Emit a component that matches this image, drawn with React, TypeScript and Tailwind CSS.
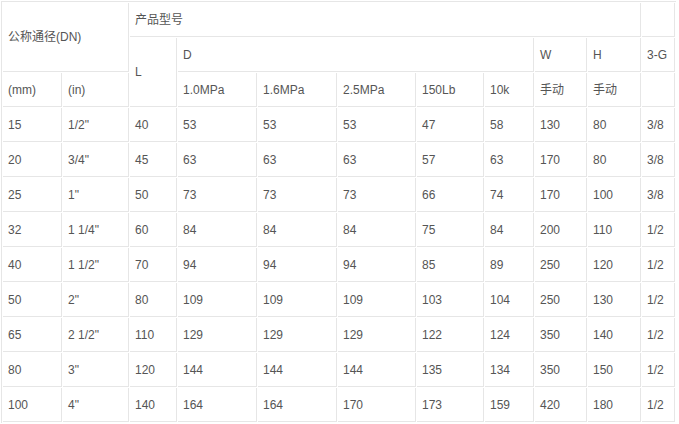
import React from 'react';

const rows: string[][] = [
  ['15', '1/2"', '40', '53', '53', '53', '47', '58', '130', '80', '3/8'],
  ['20', '3/4"', '45', '63', '63', '63', '57', '63', '170', '80', '3/8'],
  ['25', '1"', '50', '73', '73', '73', '66', '74', '170', '100', '3/8'],
  ['32', '1 1/4"', '60', '84', '84', '84', '75', '84', '200', '110', '1/2'],
  ['40', '1 1/2"', '70', '94', '94', '94', '85', '89', '250', '120', '1/2'],
  ['50', '2"', '80', '109', '109', '109', '103', '104', '250', '130', '1/2'],
  ['65', '2 1/2"', '110', '129', '129', '129', '122', '124', '350', '140', '1/2'],
  ['80', '3"', '120', '144', '144', '144', '135', '134', '350', '150', '1/2'],
  ['100', '4"', '140', '164', '164', '170', '173', '159', '420', '180', '1/2'],
];

// largeurs des colonnes (sans l'espacement de 1px)
const widths = [59, 66, 47, 79, 79, 78, 67, 49, 52, 53, 33];

// cellule : bordure droite + bas seulement, le trou aux croisements vient du border-spacing
const cell = 'h-[34px] border-r border-b border-[#e6e6e6] pl-[5px] pr-0 py-0 text-left align-middle font-normal whitespace-nowrap';

export default function App() {
  return (
    <div className="bg-white p-px" style={{ fontFamily: '"Liberation Sans", "Noto Sans CJK SC", Arial, sans-serif' }}>
      <table className="table-fixed border-separate border-spacing-[1px] border-t border-l border-[#e6e6e6] text-[12px] leading-[14px] text-[#555]">
        <colgroup>
          {widths.map((w, i) => (
            <col key={i} style={{ width: w }} />
          ))}
        </colgroup>
        <thead>
          <tr>
            <th colSpan={2} rowSpan={2} className={cell}>公称通径(DN)</th>
            <th colSpan={8} className={cell}>产品型号</th>
            <th className={cell}></th>
          </tr>
          <tr>
            <th rowSpan={2} className={cell}>L</th>
            <th colSpan={5} className={cell}>D</th>
            <th className={cell}>W</th>
            <th className={cell}>H</th>
            <th className={cell}>3-G</th>
          </tr>
          <tr>
            <th className={cell}>(mm)</th>
            <th className={cell}>(in)</th>
            <th className={cell}>1.0MPa</th>
            <th className={cell}>1.6MPa</th>
            <th className={cell}>2.5MPa</th>
            <th className={cell}>150Lb</th>
            <th className={cell}>10k</th>
            <th className={cell}>手动</th>
            <th className={cell}>手动</th>
            <th className={cell}></th>
          </tr>
        </thead>
        <tbody>
          {rows.map((r, i) => (
            <tr key={i}>
              {r.map((v, j) => (
                <td key={j} className={cell}>
                  {v}
                </td>
              ))}
            </tr>
          ))}
        </tbody>
      </table>
    </div>
  );
}
